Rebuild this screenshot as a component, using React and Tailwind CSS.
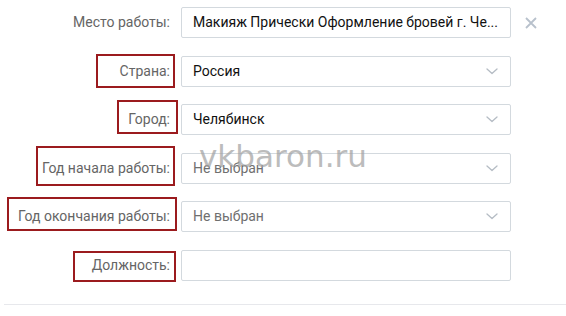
import React from "react";

function Chevron() {
  return (
    <svg width="12" height="7" viewBox="0 0 12 7" className="shrink-0">
      <path d="M1 1l5 4.5L11 1" fill="none" stroke="#b5bcc4" strokeWidth="1.3" strokeLinecap="round" strokeLinejoin="round" />
    </svg>
  );
}

function Row({ label, value, placeholder, select, mt, box, extra }) {
  return (
    <div className={`relative flex h-[31px] items-center ${mt}`}>
      <div className="w-[170px] text-right text-[14px] text-[#656565]">{label}</div>
      <div className="ml-[11px] flex h-[31px] w-[330px] items-center justify-between rounded-[2px] border border-[#d3d9de] bg-white pl-[11px] pr-[12px]">
        <span className={`whitespace-nowrap text-[14px] ${placeholder ? "text-[#6f6f6f]" : "text-[#111]"}`}>{value}</span>
        {select && <Chevron />}
      </div>
      {extra}
      {box}
    </div>
  );
}

export default function App() {
  const red = "absolute border-2 border-[#9b1b1e]";
  return (
    <div className="relative h-[316px] w-[566px] overflow-hidden bg-white" style={{ fontFamily: "Roboto, 'Noto Sans', sans-serif" }}>
      <div className="flex flex-col pt-[7px]">
        <Row
          label="Место работы:"
          value="Макияж Прически Оформление бровей г. Че..."
          mt=""
          extra={
            <svg width="12" height="12" viewBox="0 0 12 12" className="ml-[14px]">
              <path d="M1 1l10 10M11 1L1 11" stroke="#b8c1cc" strokeWidth="1.8" />
            </svg>
          }
        />
        <Row label="Страна:" value="Россия" select mt="mt-[18px]" box={<div className={`${red} left-[96px] top-[-2px] h-[34px] w-[79px]`} />} />
        <Row label="Город:" value="Челябинск" select mt="mt-[17px]" box={<div className={`${red} left-[117px] top-[-4px] h-[34px] w-[61px]`} />} />
        <Row label="Год начала работы:" value="Не выбран" placeholder select mt="mt-[18px]" box={<div className={`${red} left-[36px] top-[-7px] h-[40px] w-[139px]`} />} />
        <Row label="Год окончания работы:" value="Не выбран" placeholder select mt="mt-[17px]" box={<div className={`${red} left-[7px] top-[-4px] h-[34px] w-[170px]`} />} />
        <Row label="Должность:" value="" mt="mt-[18px]" box={<div className={`${red} left-[73px] top-[1px] h-[31px] w-[103px]`} />} />
        <div className="ml-[4px] mt-[23px] h-px bg-[#e7e8ec]" />
      </div>
      <div
        className="pointer-events-none absolute left-[199px] top-[141px] text-[31px] leading-none text-[#a0a0a0] opacity-70"
        style={{ fontFamily: "'DejaVu Sans', sans-serif" }}
      >
        vkbaron.ru
      </div>
    </div>
  );
}
